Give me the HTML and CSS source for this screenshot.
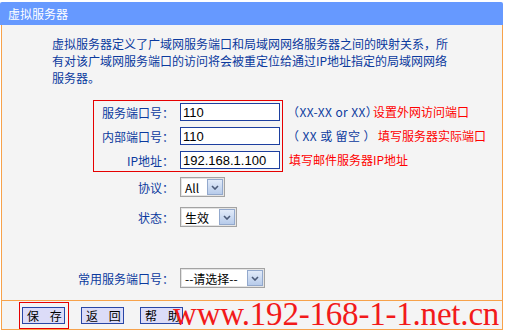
FILE: index.html
```html
<!DOCTYPE html>
<html lang="zh-CN">
<head>
<meta charset="utf-8">
<title>虚拟服务器</title>
<link rel="stylesheet" href="styles.css">
</head>
<body>
<div class="page">
  <div class="hdr">虚拟服务器</div>
  <div class="main">
    <p class="intro">虚拟服务器定义了广域网服务端口和局域网网络服务器之间的映射关系，所<br>有对该广域网服务端口的访问将会被重定位给通过IP地址指定的局域网网络<br>服务器。</p>
    <div class="grp">
      <div class="box">
        <div class="brow"><span class="lbl">服务端口号：</span><input class="txt" type="text" value="110"></div>
        <div class="brow"><span class="lbl">内部端口号：</span><input class="txt" type="text" value="110"></div>
        <div class="brow"><span class="lbl">IP地址：</span><input class="txt" type="text" value="192.168.1.100"></div>
      </div>
      <div class="hints">
        <div class="hint"><span class="blue h1">（XX-XX or XX）</span><span class="red">设置外网访问端口</span></div>
        <div class="hint"><span class="blue h2">（ XX 或 留空 ）</span><span class="red">填写服务器实际端口</span></div>
        <div class="hint"><span class="red h3">填写邮件服务器IP地址</span></div>
      </div>
    </div>
    <div class="row r1"><span class="lbl">协议：</span>
      <div class="sel w45"><span class="val">All</span><span class="arr"><svg width="8" height="5" viewBox="0 0 8 5"><path d="M1 1 L4 4 L7 1" fill="none" stroke="#4b5a78" stroke-width="1.6"/></svg></span></div>
    </div>
    <div class="row r2"><span class="lbl">状态：</span>
      <div class="sel w57"><span class="val">生效</span><span class="arr"><svg width="8" height="5" viewBox="0 0 8 5"><path d="M1 1 L4 4 L7 1" fill="none" stroke="#4b5a78" stroke-width="1.6"/></svg></span></div>
    </div>
    <div class="row r3"><span class="lbl">常用服务端口号：</span>
      <div class="sel w85"><span class="val">--请选择--</span><span class="arr"><svg width="8" height="5" viewBox="0 0 8 5"><path d="M1 1 L4 4 L7 1" fill="none" stroke="#4b5a78" stroke-width="1.6"/></svg></span></div>
    </div>
    <div class="foot">
      <div class="save"><button class="btn" type="button">保 存</button></div>
      <button class="btn back" type="button">返 回</button>
      <button class="btn help" type="button">帮 助</button>
    </div>
  </div>
  <div class="wm">www.192-168-1-1.net.cn</div>
</div>
</body>
</html>
```
FILE: styles.css
```css
html, body {
  margin: 0;
  padding: 0;
  background: #ffffff;
  overflow: hidden;
}
body {
  font-family: "Noto Sans CJK SC", sans-serif;
  font-size: 12px;
}
.page {
  position: relative;
  width: 503px;
  padding-top: 2px;
}
.hdr {
  height: 23px;
  line-height: 23px;
  background: #6699ff;
  color: #ffffff;
  padding-left: 8px;
  border-radius: 2px 2px 0 0;
}
.main {
  margin-left: 1px;
  border-left: 1px solid #f7a24a;
  border-right: 1px solid #f7a24a;
  background: #f4f4f4;
}
.intro {
  margin: 0;
  padding: 10px 0 0 50px;
  line-height: 17px;
  color: #0b3a9e;
  white-space: nowrap;
}
.grp {
  display: flex;
  margin-top: 14px;
  padding-left: 91px;
}
.box {
  border: 1px solid #e60000;
  padding: 2px 2px 2px 0;
  display: flex;
  flex-direction: column;
  gap: 6px;
}
.brow {
  display: flex;
  align-items: center;
  height: 18px;
}
.lbl {
  color: #0b3a9e;
  text-align: right;
  white-space: nowrap;
}
.box .lbl {
  width: 80px;
  margin-right: 6px;
}
.txt {
  width: 100px;
  height: 18px;
  box-sizing: border-box;
  margin: 0;
  border: 1px solid #1d3f9f;
  padding: 0 0 0 2px;
  background: #ffffff;
  color: #000000;
  font-family: "Liberation Sans", sans-serif;
  font-size: 13px;
  outline: none;
}
.hints {
  margin-left: 4px;
  padding-top: 3px;
  display: flex;
  flex-direction: column;
  gap: 6px;
}
.hint {
  height: 18px;
  line-height: 18px;
  white-space: nowrap;
}
.blue {
  color: #0b3a9e;
  display: inline-block;
  letter-spacing: 0.4px;
}
.h1 { width: 86px; }
.h2 { width: 91px; }
.h3 { padding-left: 2px; }
.red {
  color: #ff0000;
}
.row {
  display: flex;
  align-items: center;
  height: 20px;
}
.row .lbl {
  width: 172px;
  margin-right: 6px;
}
.r1 { margin-top: 5px; }
.r2 { margin-top: 10px; }
.r3 { margin-top: 41px; }
.sel {
  display: flex;
  align-items: center;
  height: 20px;
  box-sizing: border-box;
  border: 1px solid #a3a3a3;
  box-shadow: inset 0 0 0 1px #e4e4e4;
  background: #ffffff;
  padding-left: 4px;
  color: #000000;
  font-size: 12px;
}
.sel .val {
  flex: 1;
  white-space: nowrap;
}
.w45 { width: 45px; }
.w57 { width: 57px; }
.w85 { width: 85px; }
.arr {
  width: 16px;
  height: 16px;
  margin: 1px;
  box-sizing: border-box;
  border: 1px solid #93a9cd;
  background: linear-gradient(#e2ebf9, #b7cbea);
  display: flex;
  align-items: center;
  justify-content: center;
}
.foot {
  margin-top: 12px;
  border-top: 1px solid #f7a24a;
  border-bottom: 1px solid #f7a24a;
  height: 27px;
  padding: 1px 0 0 17px;
  display: flex;
  align-items: flex-start;
}
.save {
  border: 1px solid #e60000;
  padding: 4px 3px 4px 2px;
  display: flex;
}
.btn {
  width: 43px;
  height: 17px;
  box-sizing: border-box;
  margin: 0;
  padding: 0 0 0 4px;
  border: 1px solid #2846a6;
  background: #dcdcf8;
  color: #000000;
  font-family: "Noto Sans CJK SC", sans-serif;
  font-size: 12px;
  line-height: 15px;
  letter-spacing: 4px;
  text-align: center;
  white-space: nowrap;
}
.back {
  margin-top: 5px;
  margin-left: 12px;
}
.help {
  margin-top: 5px;
  margin-left: 16px;
}
.wm {
  position: absolute;
  left: 173px;
  top: 298px;
  font-family: "Liberation Serif", serif;
  font-size: 33px;
  line-height: 33px;
  letter-spacing: -0.2px;
  color: #f21a1a;
  white-space: nowrap;
}
```
